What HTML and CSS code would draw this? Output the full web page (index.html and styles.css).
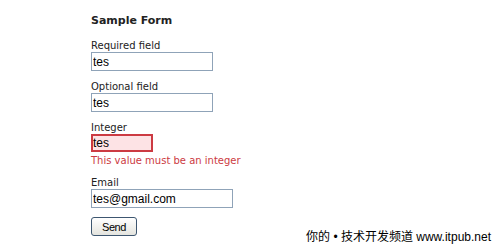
FILE: index.html
```html
<!DOCTYPE html>
<html>
<head>
<meta charset="utf-8">
<link rel="stylesheet" href="styles.css">
</head>
<body>
<div class="page">
  <form class="form">
    <h1 class="title">Sample Form</h1>
    <div class="field">
      <label class="label">Required field</label>
      <input class="input w-req" type="text" value="tes">
    </div>
    <div class="field">
      <label class="label">Optional field</label>
      <input class="input w-req" type="text" value="tes">
    </div>
    <div class="field">
      <label class="label">Integer</label>
      <input class="input w-int error" type="text" value="tes">
      <div class="error-msg">This value must be an integer</div>
    </div>
    <div class="field">
      <label class="label">Email</label>
      <input class="input w-email" type="text" value="tes@gmail.com">
    </div>
    <button class="btn" type="button">Send</button>
  </form>
  <div class="watermark">你的<span class="latin"> • </span>技术开发频道<span class="latin"> www.itpub.net</span></div>
</div>
</body>
</html>
```
FILE: styles.css
```css
html, body {
  margin: 0;
  padding: 0;
  background: #ffffff;
}
.page {
  position: relative;
  width: 500px;
  height: 250px;
  overflow: hidden;
}
.form {
  display: flex;
  flex-direction: column;
  align-items: flex-start;
  padding: 13px 0 0 91px;
  font-family: "DejaVu Sans", Verdana, sans-serif;
}
.title {
  margin: 0 0 11px 0;
  font-size: 11px;
  font-weight: bold;
  color: #222;
  line-height: 15px;
}
.field {
  display: flex;
  flex-direction: column;
  align-items: flex-start;
  margin-bottom: 9px;
}
.label {
  font-size: 10px;
  line-height: 13px;
  color: #222;
}
.input {
  box-sizing: border-box;
  height: 19px;
  margin: 0;
  padding: 0 1px;
  border: 1px solid #8fa3b8;
  background: #fff;
  font-family: "Liberation Sans", Arial, sans-serif;
  font-size: 12px;
  color: #000;
  outline: none;
}
.w-req { width: 122px; }
.w-int { width: 62px; height: 18px; }
.w-email { width: 142px; }
.input.error {
  border: 2px solid #cc3a42;
  background: #fde3e5;
  padding-left: 0;
}
.error-msg {
  color: #cc3a42;
  font-size: 10px;
  line-height: 13px;
  margin-top: 2px;
}
.btn {
  box-sizing: border-box;
  width: 46px;
  height: 19px;
  padding: 0;
  border: 1px solid #3d5670;
  border-radius: 3px;
  background: linear-gradient(#ffffff, #e4e4de);
  font-family: "Liberation Sans", Arial, sans-serif;
  font-size: 11px;
  letter-spacing: -0.4px;
  color: #000;
}
.watermark {
  position: absolute;
  right: 9px;
  bottom: 6px;
  font-family: "Noto Sans CJK SC", sans-serif;
  font-size: 12px;
  line-height: 14px;
  color: #000;
  white-space: pre;
}
.latin {
  font-family: "Liberation Sans", Arial, sans-serif;
}
```
